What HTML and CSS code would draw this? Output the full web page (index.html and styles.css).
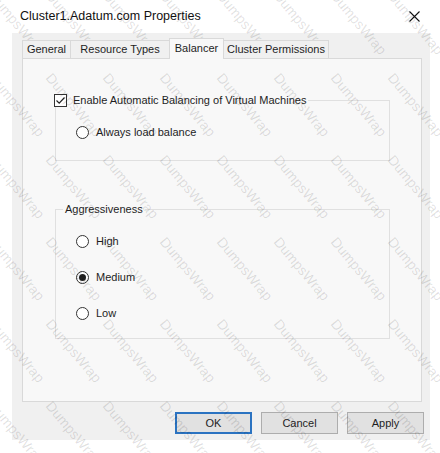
FILE: index.html
```html
<!DOCTYPE html>
<html lang="en">
  <head>
    <meta charset="UTF-8" />
    <meta name="viewport" content="width=device-width, initial-scale=1.0" />
    <title>Cluster1.Adatum.com Properties</title>
    <link rel="stylesheet" href="styles.css">
  </head>
  <body>
    <div class="window">
      <header class="titlebar">
        <span class="title">Cluster1.Adatum.com Properties</span>
        <span class="close" aria-label="Close">
          <svg width="11" height="11" viewBox="0 0 11 11">
            <path d="M0.5 0.5 L10.5 10.5 M10.5 0.5 L0.5 10.5" stroke="#111" stroke-width="1.1" fill="none" />
          </svg>
        </span>
      </header>

      <div class="frame">
        <div class="tabs">
          <span class="tab tab-general">General</span>
          <span class="tab tab-resource">Resource Types</span>
          <span class="tab tab-balancer active">Balancer</span>
          <span class="tab tab-perms">Cluster Permissions</span>
        </div>

        <div class="panel">
          <fieldset class="group group-auto">
            <legend class="legend-check">
              <span class="checkbox">
                <svg width="11" height="11" viewBox="0 0 11 11">
                  <path d="M1.5 5.5 L4.2 8.2 L9.5 2.5" stroke="#222" stroke-width="1.2" fill="none" />
                </svg>
              </span>
              Enable Automatic Balancing of Virtual Machines
            </legend>
            <label class="option first"><span class="radio"></span>Always load balance</label>
          </fieldset>

          <fieldset class="group group-aggr">
            <legend class="legend-text">Aggressiveness</legend>
            <label class="option first"><span class="radio"></span>High</label>
            <label class="option"><span class="radio selected"></span>Medium</label>
            <label class="option"><span class="radio"></span>Low</label>
          </fieldset>
        </div>

        <div class="buttons">
          <button class="btn default">OK</button>
          <button class="btn">Cancel</button>
          <button class="btn">Apply</button>
        </div>
      </div>

      <!-- watermark layer over the whole dialog -->
      <div class="watermark" aria-hidden="true">
        <span>DumpsWrap</span><span>DumpsWrap</span><span>DumpsWrap</span><span>DumpsWrap</span><span>DumpsWrap</span><span>DumpsWrap</span><span>DumpsWrap</span><span>DumpsWrap</span><span>DumpsWrap</span>
        <span>DumpsWrap</span><span>DumpsWrap</span><span>DumpsWrap</span><span>DumpsWrap</span><span>DumpsWrap</span><span>DumpsWrap</span><span>DumpsWrap</span><span>DumpsWrap</span><span>DumpsWrap</span>
        <span>DumpsWrap</span><span>DumpsWrap</span><span>DumpsWrap</span><span>DumpsWrap</span><span>DumpsWrap</span><span>DumpsWrap</span><span>DumpsWrap</span><span>DumpsWrap</span><span>DumpsWrap</span>
        <span>DumpsWrap</span><span>DumpsWrap</span><span>DumpsWrap</span><span>DumpsWrap</span><span>DumpsWrap</span><span>DumpsWrap</span><span>DumpsWrap</span><span>DumpsWrap</span><span>DumpsWrap</span>
        <span>DumpsWrap</span><span>DumpsWrap</span><span>DumpsWrap</span><span>DumpsWrap</span><span>DumpsWrap</span><span>DumpsWrap</span><span>DumpsWrap</span><span>DumpsWrap</span><span>DumpsWrap</span>
        <span>DumpsWrap</span><span>DumpsWrap</span><span>DumpsWrap</span><span>DumpsWrap</span><span>DumpsWrap</span><span>DumpsWrap</span><span>DumpsWrap</span><span>DumpsWrap</span><span>DumpsWrap</span>
      </div>
    </div>
  </body>
</html>
```

FILE: styles.css
```css
/* Basic Reset & Body Styling */
body {
  margin: 0;
  background-color: #ffffff;
  font-family: "Liberation Sans", Arial, sans-serif;
  color: #1e1e1e;
}

/* Dialog window */
.window {
  position: relative;
  width: 440px;
  height: 453px;
  overflow: hidden;
  background-color: #ffffff;
}

/* Title bar */
.titlebar {
  height: 33px;
  display: flex;
  align-items: center;
  justify-content: space-between;
  padding: 0 20px 2px 20px;
  box-sizing: border-box;
}

.title {
  font-size: 12.5px;
  color: #111;
}

.close {
  display: flex;
  margin-top: 1px;
}

/* Grey dialog body */
.frame {
  margin-left: 12px;
  width: 418px;
  height: 407px;
  box-sizing: border-box;
  padding: 5px 8px 0 10px;
  background-color: #f0f0f0;
}

/* Tab strip */
.tabs {
  position: relative;
  z-index: 1;
  display: flex;
  align-items: flex-end;
  height: 20px;
}

.tab {
  height: 18px;
  box-sizing: border-box;
  border: 1px solid #d9d9d9;
  border-bottom: none;
  margin-left: -1px;
  font-size: 11px;
  line-height: 17px;
  text-align: center;
  background-color: #f0f0f0;
}

.tab-general {
  width: 49px;
  margin-left: 0;
}

.tab-resource {
  width: 100px;
}

.tab-balancer {
  width: 55px;
}

.tab-perms {
  width: 106px;
}

.tab.active {
  height: 21px;
  margin-bottom: -1px;
  line-height: 19px;
  background-color: #f8f8f8;
}

/* Tab page */
.panel {
  width: 400px;
  height: 344px;
  box-sizing: border-box;
  border: 1px solid #d9d9d9;
  padding: 0 31px 0 32px;
  background-color: #f8f8f8;
}

/* Group boxes */
.group {
  margin: 0;
  padding: 0;
  border: 1px solid #e0e0e0;
  font-size: 11px;
}

.group-auto {
  margin-top: 34px;
  padding-bottom: 21px;
}

.group-aggr {
  margin-top: 41px;
  padding-bottom: 18px;
}

.legend-check {
  display: flex;
  align-items: center;
  gap: 6px;
  height: 14px;
  margin-left: -2px;
  padding: 0 2px 0 0;
  line-height: 14px;
}

.legend-text {
  height: 14px;
  margin-left: 7px;
  padding: 0 2px;
  line-height: 14px;
}

/* Checkbox and radio marks */
.checkbox {
  display: flex;
  align-items: center;
  justify-content: center;
  width: 13px;
  height: 13px;
  box-sizing: border-box;
  border: 1px solid #333;
  background-color: #ffffff;
}

.option {
  display: flex;
  align-items: center;
  gap: 7px;
  height: 14px;
  margin: 22px 0 0 20px;
  line-height: 14px;
}

.option.first {
  margin-top: 18px;
}

.radio {
  display: flex;
  align-items: center;
  justify-content: center;
  width: 13px;
  height: 13px;
  box-sizing: border-box;
  border: 1px solid #333;
  border-radius: 50%;
  background-color: #ffffff;
}

.radio.selected::after {
  content: "";
  width: 7px;
  height: 7px;
  border-radius: 50%;
  background-color: #222;
}

/* Dialog buttons */
.buttons {
  display: flex;
  justify-content: flex-end;
  gap: 9px;
  margin: 10px -2px 0 0;
}

.btn {
  width: 77px;
  height: 22px;
  box-sizing: border-box;
  border: 1px solid #adadad;
  background-color: #e1e1e1;
  font-family: "Liberation Sans", Arial, sans-serif;
  font-size: 11px;
  color: #1e1e1e;
  padding: 0;
}

.btn.default {
  border: 2px solid #2b73c1;
}

/* Watermark overlay */
.watermark {
  position: absolute;
  left: -2px;
  top: -12px;
  display: grid;
  grid-template-columns: repeat(9, 57px);
  grid-auto-rows: 82px;
  pointer-events: none;
}

.watermark span {
  align-self: start;
  justify-self: start;
  font-size: 14px;
  white-space: nowrap;
  color: rgba(0, 0, 0, 0.12);
  transform: rotate(50deg);
  transform-origin: 0 0;
}
```
